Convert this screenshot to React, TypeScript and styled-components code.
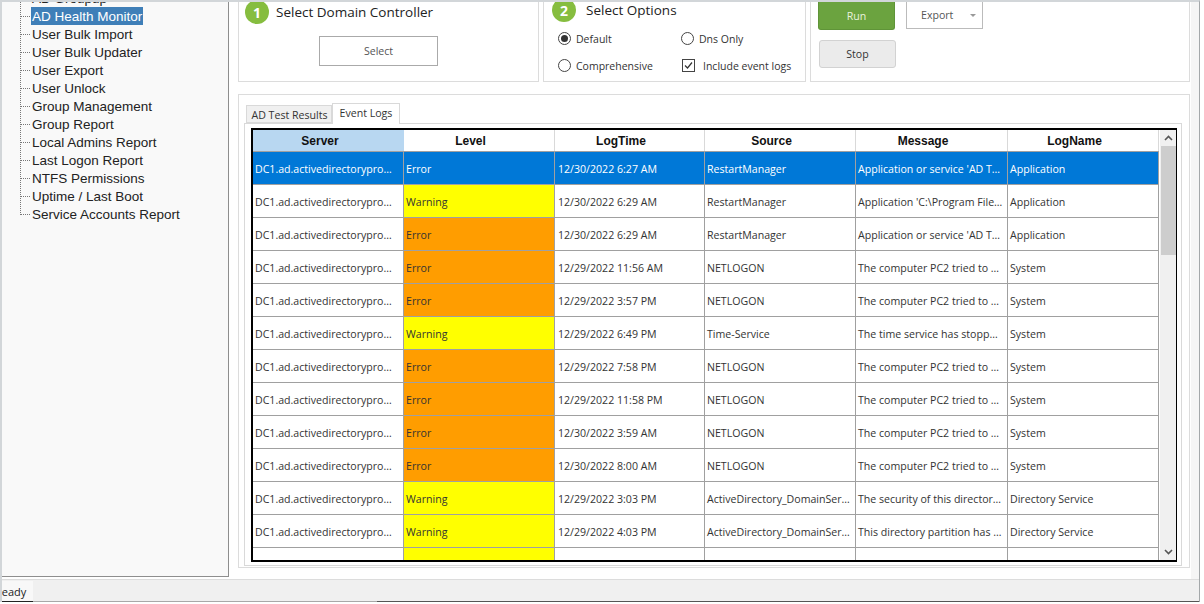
import React from "react"
import styled, { createGlobalStyle } from "styled-components"

const GlobalStyle = createGlobalStyle`
  html, body { margin: 0; padding: 0; background: #fff; }
  body { width: 1204px; height: 604px; overflow: hidden; font-family: "Liberation Sans", Arial, sans-serif; }
`

type Level = "Error" | "Warning" | ""

interface LogRow {
  level: Level
  time: string
  source: string
  message: string
  logName: string
}

const SERVER = "DC1.ad.activedirectorypro…"

const rows: LogRow[] = [
  { level: "Error", time: "12/30/2022 6:27 AM", source: "RestartManager", message: "Application or service 'AD T…", logName: "Application" },
  { level: "Warning", time: "12/30/2022 6:29 AM", source: "RestartManager", message: "Application 'C:\\Program File…", logName: "Application" },
  { level: "Error", time: "12/30/2022 6:29 AM", source: "RestartManager", message: "Application or service 'AD T…", logName: "Application" },
  { level: "Error", time: "12/29/2022 11:56 AM", source: "NETLOGON", message: "The computer PC2 tried to …", logName: "System" },
  { level: "Error", time: "12/29/2022 3:57 PM", source: "NETLOGON", message: "The computer PC2 tried to …", logName: "System" },
  { level: "Warning", time: "12/29/2022 6:49 PM", source: "Time-Service", message: "The time service has stopp…", logName: "System" },
  { level: "Error", time: "12/29/2022 7:58 PM", source: "NETLOGON", message: "The computer PC2 tried to …", logName: "System" },
  { level: "Error", time: "12/29/2022 11:58 PM", source: "NETLOGON", message: "The computer PC2 tried to …", logName: "System" },
  { level: "Error", time: "12/30/2022 3:59 AM", source: "NETLOGON", message: "The computer PC2 tried to …", logName: "System" },
  { level: "Error", time: "12/30/2022 8:00 AM", source: "NETLOGON", message: "The computer PC2 tried to …", logName: "System" },
  { level: "Warning", time: "12/29/2022 3:03 PM", source: "ActiveDirectory_DomainSer…", message: "The security of this director…", logName: "Directory Service" },
  { level: "Warning", time: "12/29/2022 4:03 PM", source: "ActiveDirectory_DomainSer…", message: "This directory partition has …", logName: "Directory Service" },
  { level: "Warning", time: "", source: "", message: "", logName: "" },
]

const treeItems = [
  "AD Health Monitor",
  "User Bulk Import",
  "User Bulk Updater",
  "User Export",
  "User Unlock",
  "Group Management",
  "Group Report",
  "Local Admins Report",
  "Last Logon Report",
  "NTFS Permissions",
  "Uptime / Last Boot",
  "Service Accounts Report",
]

const Page = styled.div`
  width: 1204px;
  height: 604px;
  background: #fff;
  overflow: hidden;
`

const Window = styled.div`
  width: 1200px;
  height: 602px;
  box-sizing: border-box;
  border-top: 2px solid #d2d6d9;
  border-left: 2px solid #d2d6d9;
  border-right: 1px solid #a4a8aa;
  display: flex;
  flex-direction: column;
  background: #fff;
  overflow: hidden;
`

const Main = styled.div`
  flex: 1;
  display: flex;
  min-height: 0;
`

const Sidebar = styled.div`
  width: 227px;
  box-sizing: border-box;
  background: #f9f9f9;
  border-right: 1px solid #8e8e8e;
  border-bottom: 1px solid #8e8e8e;
  margin-bottom: 2px;
  overflow: hidden;
  padding-left: 18px;
  flex-shrink: 0;
`

const Tree = styled.div`
  margin-top: -13px;
  border-left: 1px dotted #777;
  height: 226px;
  display: flex;
  flex-direction: column;
`

const TreeRow = styled.div`
  height: 18px;
  display: flex;
  align-items: center;
  flex-shrink: 0;
  &::before {
    content: "";
    width: 9px;
    border-top: 1px dotted #777;
    margin-right: 1px;
  }
`

const TreeLabel = styled.span<{ $selected?: boolean }>`
  display: block;
  height: 18px;
  box-sizing: border-box;
  font-size: 13.5px;
  line-height: 18px;
  padding: 1px 1px 0;
  white-space: nowrap;
  color: ${(p) => (p.$selected ? "#fff" : "#222")};
  background: ${(p) => (p.$selected ? "#3f7fb8" : "transparent")};
`

const Content = styled.div`
  flex: 1;
  display: flex;
  flex-direction: column;
  background: #fff;
  padding: 0 1px 11px 8px;
  margin-left: 1px;
  border-right: 8px solid #f5f5f5;
  min-width: 0;
`

const TopRow = styled.div`
  display: flex;
  height: 80px;
  flex-shrink: 0;
  gap: 4px;
`

const Panel = styled.div<{ $width: number }>`
  width: ${(p) => p.$width}px;
  box-sizing: border-box;
  border: 1px solid #dcdcdc;
  border-top: none;
  flex-shrink: 0;
`

const StepHead = styled.div<{ $height: number; $inset: number; $gap: number }>`
  display: flex;
  align-items: center;
  gap: ${(p) => p.$gap}px;
  padding-left: ${(p) => p.$inset}px;
  height: ${(p) => p.$height}px;
`

const StepBadge = styled.span`
  width: 24px;
  height: 24px;
  border-radius: 50%;
  background: #86bd3f;
  color: #fff;
  font: bold 14px "Open Sans", sans-serif;
  display: flex;
  align-items: center;
  justify-content: center;
  flex-shrink: 0;
`

const StepTitle = styled.span`
  font: 13.5px "Open Sans", sans-serif;
  color: #222;
  white-space: nowrap;
`

const SelectWrap = styled.div`
  display: flex;
  padding: 14px 0 0 80px;
`

const OutlineButton = styled.div`
  width: 119px;
  height: 30px;
  box-sizing: border-box;
  border: 1px solid #aaa;
  background: #fff;
  color: #555;
  font: 10.6px "Open Sans", sans-serif;
  display: flex;
  align-items: center;
  justify-content: center;
`

const OptionGrid = styled.div`
  display: grid;
  grid-template-columns: 123px 1fr;
  grid-auto-rows: 27px;
  padding: 7px 0 0 14px;
`

const Option = styled.div`
  display: flex;
  align-items: center;
  gap: 5px;
  font: 10.5px "Open Sans", sans-serif;
  color: #333;
  white-space: nowrap;
`

const Radio = styled.span<{ $checked?: boolean }>`
  width: 13px;
  height: 13px;
  box-sizing: border-box;
  border: 1px solid #444;
  border-radius: 50%;
  background: #fff;
  display: flex;
  align-items: center;
  justify-content: center;
  &::after {
    content: "";
    width: 7px;
    height: 7px;
    border-radius: 50%;
    background: ${(p) => (p.$checked ? "#333" : "transparent")};
  }
`

const CheckBox = styled.span`
  width: 13px;
  height: 13px;
  box-sizing: border-box;
  border: 1px solid #444;
  margin: 0 3px 0 1px;
  display: flex;
  svg { display: block; }
`

const ActionPanel = styled.div`
  display: flex;
  gap: 10px;
  padding-left: 7px;
  height: 100%;
`

const ActionColumn = styled.div`
  display: flex;
  flex-direction: column;
  gap: 10px;
`

const RunButton = styled.div`
  width: 77px;
  height: 28px;
  box-sizing: border-box;
  border: 1px solid #5f9438;
  border-top: none;
  border-radius: 0 0 3px 3px;
  background: #6ba33f;
  color: #e8f2dd;
  font: 10.6px "Open Sans", sans-serif;
  display: flex;
  align-items: center;
  justify-content: center;
`

const StopButton = styled.div`
  width: 77px;
  height: 28px;
  margin-left: 1px;
  box-sizing: border-box;
  border: 1px solid #d2d2d2;
  border-radius: 3px;
  background: #ebebeb;
  color: #333;
  font: 10.6px "Open Sans", sans-serif;
  display: flex;
  align-items: center;
  justify-content: center;
`

const ExportButton = styled.div`
  width: 77px;
  height: 27px;
  box-sizing: border-box;
  border: 1px solid #bbb;
  border-top: none;
  color: #555;
  font: 10.6px "Open Sans", sans-serif;
  display: flex;
  align-items: center;
  padding-left: 14px;
  gap: 17px;
  &::after {
    content: "";
    border-left: 3px solid transparent;
    border-right: 3px solid transparent;
    border-top: 3px solid #999;
  }
`

const TabsPanel = styled.div`
  margin-top: 12px;
  flex: 1;
  min-height: 0;
  width: 952px;
  box-sizing: border-box;
  border: 1px solid #dcdcdc;
  padding: 8px 7px 1px 5px;
  display: flex;
  flex-direction: column;
`

const TabStrip = styled.div`
  display: flex;
  align-items: flex-end;
  height: 20px;
  padding-left: 2px;
  flex-shrink: 0;
`

const Tab = styled.div<{ $active?: boolean; $width: number }>`
  width: ${(p) => p.$width}px;
  height: ${(p) => (p.$active ? 21 : 18)}px;
  box-sizing: border-box;
  padding: ${(p) => (p.$active ? "0 0 3px" : "1px 0 0 1px")};
  margin-bottom: ${(p) => (p.$active ? "-1px" : "0")};
  background: ${(p) => (p.$active ? "#fff" : "#f0f0f0")};
  border: 1px solid #d9d9d9;
  border-bottom: ${(p) => (p.$active ? "none" : "1px solid #d9d9d9")};
  font: 10.6px "Open Sans", sans-serif;
  color: #333;
  display: flex;
  align-items: center;
  justify-content: center;
  white-space: nowrap;
  position: relative;
`

const TabPage = styled.div`
  flex: 1;
  min-height: 0;
  border: 1px solid #d9d9d9;
  padding: 4px 4px 3px 6px;
  display: flex;
`

const GridFrame = styled.div`
  flex: 1;
  min-height: 0;
  box-sizing: border-box;
  border: 2px solid #000;
  border-right-width: 1px;
  display: flex;
  overflow: hidden;
  background: #fff;
`

const GridBody = styled.div`
  width: 906px;
  flex-shrink: 0;
  overflow: hidden;
`

const columns = "151px 151px 150px 151px 152px 151px"

const Row = styled.div<{ $selected?: boolean }>`
  display: grid;
  grid-template-columns: ${columns};
  height: 33px;
  box-sizing: border-box;
  border-bottom: 1px solid #a0a0a0;
  background: ${(p) => (p.$selected ? "#0078d7" : "#fff")};
  color: ${(p) => (p.$selected ? "#fff" : "#333")};
`

const HeaderRow = styled.div`
  display: grid;
  grid-template-columns: ${columns};
  height: 22px;
  box-sizing: border-box;
  border-bottom: 1px solid #a0a0a0;
`

const HeaderCell = styled.div<{ $sorted?: boolean }>`
  box-sizing: border-box;
  padding-right: 17px;
  font: bold 12px "Liberation Sans", Arial, sans-serif;
  color: #111;
  display: flex;
  align-items: center;
  justify-content: center;
  background: ${(p) => (p.$sorted ? "#b8d7f1" : "#fff")};
  border-right: ${(p) => (p.$sorted ? "none" : "1px solid #d9d9d9")};
`

const levelBg = (l: Level) => (l === "Error" ? "#ff9d00" : l === "Warning" ? "#ffff00" : "transparent")

const Cell = styled.div<{ $level?: Level; $selected?: boolean; $pad?: number }>`
  box-sizing: border-box;
  padding: 1px 0 0 ${(p) => p.$pad ?? 2}px;
  border-right: 1px solid #a0a0a0;
  font: 10.6px "Open Sans", sans-serif;
  white-space: nowrap;
  overflow: hidden;
  display: flex;
  align-items: center;
  background: ${(p) => (p.$level && !p.$selected ? levelBg(p.$level) : "transparent")};
`

const ScrollBar = styled.div`
  flex: 1;
  background: #f0f0f0;
  display: flex;
  flex-direction: column;
  padding-left: 1px;
  border-left: 1px solid #fff;
`

const ScrollArrow = styled.div`
  height: 16px;
  flex-shrink: 0;
  display: flex;
  align-items: center;
  justify-content: center;
`

const ScrollThumb = styled.div`
  width: 100%;
  height: 109px;
  background: #cdcdcd;
  flex-shrink: 0;
`

const ScrollTrack = styled.div`
  flex: 1;
`

const StatusBar = styled.div`
  height: 23px;
  flex-shrink: 0;
  background: #f0f0f0;
  border-top: 1px solid #dcdcdc;
  box-sizing: border-box;
  display: flex;
  overflow: hidden;
`

const StatusSegment = styled.div<{ $width?: number; $line: string }>`
  width: ${(p) => (p.$width ? `${p.$width}px` : "auto")};
  flex: ${(p) => (p.$width ? "none" : 1)};
  border-bottom: 1px solid ${(p) => p.$line};
`

const StatusChip = styled.div`
  width: 31px;
  margin-top: 1px;
  box-sizing: border-box;
  background: #f8f8f8;
  border-bottom: 1px solid #222;
  overflow: hidden;
  display: flex;
  align-items: center;
`

const StatusText = styled.div`
  font: 11px "Open Sans", sans-serif;
  color: #222;
  margin-left: -7px;
`

const Chevron = ({ up }: { up?: boolean }) => (
  <svg width="9" height="6" viewBox="0 0 9 6">
    <path d={up ? "M1 5 L4.5 1.5 L8 5" : "M1 1 L4.5 4.5 L8 1"} fill="none" stroke="#555" strokeWidth="1.6" />
  </svg>
)

const App = () => {
  return (
    <Page>
      <GlobalStyle />
      <Window>
        <Main>
          <Sidebar>
            <Tree>
              <TreeRow>
                <TreeLabel>AD Groupup</TreeLabel>
              </TreeRow>
              {treeItems.map((item, i) => (
                <TreeRow key={item}>
                  <TreeLabel $selected={i === 0}>{item}</TreeLabel>
                </TreeRow>
              ))}
            </Tree>
          </Sidebar>
          <Content>
            <TopRow>
              <Panel $width={301}>
                <StepHead $height={20} $inset={6} $gap={7}>
                  <StepBadge>1</StepBadge>
                  <StepTitle>Select Domain Controller</StepTitle>
                </StepHead>
                <SelectWrap>
                  <OutlineButton>Select</OutlineButton>
                </SelectWrap>
              </Panel>
              <Panel $width={263}>
                <StepHead $height={16} $inset={8} $gap={10}>
                  <StepBadge>2</StepBadge>
                  <StepTitle>Select Options</StepTitle>
                </StepHead>
                <OptionGrid>
                  <Option><Radio $checked />Default</Option>
                  <Option><Radio />Dns Only</Option>
                  <Option><Radio />Comprehensive</Option>
                  <Option>
                    <CheckBox>
                      <svg width="11" height="11" viewBox="0 0 11 11">
                        <path d="M2 5.5 L4.5 8 L9 2.5" fill="none" stroke="#333" strokeWidth="1.2" />
                      </svg>
                    </CheckBox>
                    Include event logs
                  </Option>
                </OptionGrid>
              </Panel>
              <Panel $width={380}>
                <ActionPanel>
                  <ActionColumn>
                    <RunButton>Run</RunButton>
                    <StopButton>Stop</StopButton>
                  </ActionColumn>
                  <ExportButton>Export</ExportButton>
                </ActionPanel>
              </Panel>
            </TopRow>
            <TabsPanel>
              <TabStrip>
                <Tab $width={86}>AD Test Results</Tab>
                <Tab $active $width={68}>Event Logs</Tab>
              </TabStrip>
              <TabPage>
                <GridFrame>
                  <GridBody>
                    <HeaderRow>
                      <HeaderCell $sorted>Server</HeaderCell>
                      <HeaderCell>Level</HeaderCell>
                      <HeaderCell>LogTime</HeaderCell>
                      <HeaderCell>Source</HeaderCell>
                      <HeaderCell>Message</HeaderCell>
                      <HeaderCell>LogName</HeaderCell>
                    </HeaderRow>
                    {rows.map((r, i) => (
                      <Row key={i} $selected={i === 0}>
                        <Cell>{i < 12 ? SERVER : ""}</Cell>
                        <Cell $level={r.level} $selected={i === 0}>{i < 12 ? r.level : ""}</Cell>
                        <Cell $pad={3}>{r.time}</Cell>
                        <Cell $pad={2}>{r.source}</Cell>
                        <Cell $pad={2}>{r.message}</Cell>
                        <Cell $pad={2}>{r.logName}</Cell>
                      </Row>
                    ))}
                  </GridBody>
                  <ScrollBar>
                    <ScrollArrow><Chevron up /></ScrollArrow>
                    <ScrollThumb />
                    <ScrollTrack />
                    <ScrollArrow><Chevron /></ScrollArrow>
                  </ScrollBar>
                </GridFrame>
              </TabPage>
            </TabsPanel>
          </Content>
        </Main>
        <StatusBar>
          <StatusChip>
            <StatusText>Ready</StatusText>
          </StatusChip>
          <StatusSegment $width={344} $line="#a8a8a8" />
          <StatusSegment $line="#555" />
        </StatusBar>
      </Window>
    </Page>
  )
}

export default App
